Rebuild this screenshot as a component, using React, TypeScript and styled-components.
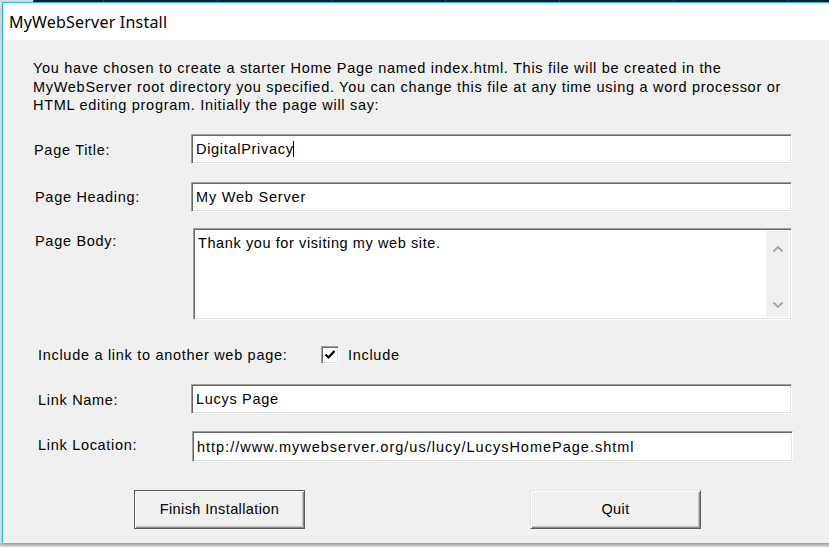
import React from 'react';
import styled, { createGlobalStyle } from 'styled-components';

const Global = createGlobalStyle`
  html, body { margin: 0; padding: 0; width: 829px; height: 547px; overflow: hidden; background: #e6e6e6; }
  #root { width: 829px; height: 547px; }
  * { box-sizing: border-box; }
`;

const Desktop = styled.div`
  width: 829px;
  height: 547px;
  overflow: hidden;
  background: #e8e8e8;
  display: flex;
  flex-direction: column;
`;

const Taskbar = styled.div`
  flex: none;
  height: 2px;
  display: flex;
  background: #0f1e2b;
`;

const TaskSlot = styled.div<{ $w: number; $light?: boolean }>`
  flex: none;
  width: ${p => p.$w}px;
  height: 2px;
  background: ${p => (p.$light ? '#dfe6ea' : '#0f1e2b')};
  border-right: 1px solid #3c4a55;
`;

const Window = styled.div`
  flex: none;
  margin-left: 2px;
  width: 860px;
  height: 541px;
  border-top: 1px solid #1cc3cf;
  border-left: 1px solid #1cc3cf;
  background: #f0f0f0;
  display: flex;
  flex-direction: column;
  box-shadow: 0 1px 4px rgba(0, 0, 0, 0.28);
  position: relative;
  z-index: 1;
`;

const TitleBar = styled.div`
  flex: none;
  height: 37px;
  background: #ffffff;
  display: flex;
  align-items: center;
  padding-left: 6px;
  padding-top: 1px;
  font-family: 'Noto Sans', 'Open Sans', sans-serif;
  font-size: 16px;
  letter-spacing: 0.2px;
  color: #000;
`;

const Client = styled.div`
  flex: 1;
  display: flex;
  flex-direction: column;
  padding: 19px 0 0 30px;
  font-family: 'Liberation Sans', Arial, sans-serif;
  font-size: 14.5px;
  letter-spacing: 0.7px;
  color: #000;
`;

const Intro = styled.p`
  margin: 0;
  line-height: 18.5px;
  white-space: nowrap;
`;

const Row = styled.div<{ $top: number; $align?: string }>`
  display: flex;
  align-items: ${p => p.$align || 'center'};
  margin-top: ${p => p.$top}px;
`;

const Label = styled.div<{ $indent: number; $w?: number; $dy?: number }>`
  flex: none;
  width: ${p => p.$w ?? 158}px;
  padding-left: ${p => p.$indent}px;
  margin-top: ${p => p.$dy ?? 0}px;
  white-space: nowrap;
`;

const Field = styled.div<{ $h: number; $shift?: number; $spacing?: number }>`
  flex: none;
  width: 601px;
  height: ${p => p.$h}px;
  margin-left: ${p => p.$shift ?? 0}px;
  letter-spacing: ${p => p.$spacing ?? 0.7}px;
  background: #fff;
  border: 1px solid;
  border-color: #a0a0a0 #ffffff #ffffff #a0a0a0;
  box-shadow: inset 1px 1px 0 #696969, inset -1px -1px 0 #e3e3e3;
  display: flex;
  align-items: center;
  padding-left: 4px;
  padding-top: 1px;
  white-space: nowrap;
  overflow: hidden;
`;

const Caret = styled.span`
  display: inline-block;
  width: 1px;
  height: 16px;
  background: #000;
  margin-left: -1px;
`;

const Area = styled.div`
  flex: none;
  width: 599px;
  height: 92px;
  margin-left: 2px;
  background: #fff;
  border: 1px solid;
  border-color: #a0a0a0 #ffffff #ffffff #a0a0a0;
  box-shadow: inset 1px 1px 0 #696969, inset -1px -1px 0 #e3e3e3;
  display: flex;
  padding: 2px;
`;

const AreaText = styled.div`
  flex: 1;
  padding: 4px 0 0 2px;
  line-height: 16px;
  letter-spacing: 0.6px;
`;

const ScrollBar = styled.div`
  flex: none;
  width: 23px;
  background: #f0f0f0;
  display: flex;
  flex-direction: column;
  justify-content: space-between;
  align-items: center;
  padding: 14px 0 8px;
`;

const Check = styled.div`
  flex: none;
  width: 18px;
  height: 18px;
  background: #fff;
  border: 1px solid;
  border-color: #a0a0a0 #ffffff #ffffff #a0a0a0;
  box-shadow: inset 1px 1px 0 #696969, inset -1px -1px 0 #e3e3e3;
  display: flex;
  align-items: center;
  justify-content: center;
`;

const CheckText = styled.span`
  margin-left: 9px;
`;

const Buttons = styled.div`
  display: flex;
  margin-top: 28px;
  padding-left: 101px;
  gap: 225px;
`;

const Button = styled.button<{ $default?: boolean }>`
  width: 171px;
  height: 39px;
  font-family: 'Liberation Sans', Arial, sans-serif;
  font-size: 14.5px;
  letter-spacing: 0.4px;
  color: #000;
  background: #f0f0f0;
  padding: 0 0 1px;
  border: 1px solid;
  border-color: ${p => (p.$default ? '#5a5a5a' : '#e3e3e3')} #5a5a5a #5a5a5a ${p => (p.$default ? '#5a5a5a' : '#e3e3e3')};
  box-shadow: inset 1px 1px 0 #ffffff, inset -1px -1px 0 #8a8a8a, inset -2px -2px 0 #c8c8c8;
`;

const Shadow = styled.div`
  flex: none;
  height: 4px;
  background: linear-gradient(#bdbdbd, #e0e0e0);
`;

const Chevron = ({ up }: { up?: boolean }) => (
  <svg width="12" height="8" viewBox="0 0 12 8">
    <path
      d={up ? 'M1.5 6.5 L6 2 L10.5 6.5' : 'M1.5 1.5 L6 6 L10.5 1.5'}
      fill="none"
      stroke="#a6a6a6"
      strokeWidth="1.8"
    />
  </svg>
);

export default function App() {
  return (
    <>
      <Global />
      <Desktop>
        <Taskbar>
          <TaskSlot $w={34} $light />
          <TaskSlot $w={70} />
          <TaskSlot $w={114} />
          <TaskSlot $w={114} />
          <TaskSlot $w={114} />
          <TaskSlot $w={114} />
          <TaskSlot $w={114} />
          <TaskSlot $w={114} />
        </Taskbar>
        <Window>
          <TitleBar>MyWebServer Install</TitleBar>
          <Client>
            <Intro>
              You have chosen to create a starter Home Page named index.html. This file will be created in the
              <br />
              MyWebServer root directory you specified. You can change this file at any time using a word processor or
              <br />
              HTML editing program. Initially the page will say:
            </Intro>
            <Row $top={19}>
              <Label $indent={1} $dy={3}>Page Title:</Label>
              <Field $h={30}>
                DigitalPrivacy
                <Caret />
              </Field>
            </Row>
            <Row $top={18}>
              <Label $indent={2}>Page Heading:</Label>
              <Field $h={30} $spacing={0.8}>My Web Server</Field>
            </Row>
            <Row $top={16} $align="flex-start">
              <Label $indent={2} $dy={5}>Page Body:</Label>
              <Area>
                <AreaText>Thank you for visiting my web site.</AreaText>
                <ScrollBar>
                  <Chevron up />
                  <Chevron />
                </ScrollBar>
              </Area>
            </Row>
            <Row $top={26}>
              <Label $indent={5} $w={288}>Include a link to another web page:</Label>
              <Check>
                <svg width="12" height="11" viewBox="0 0 12 11">
                  <path d="M1.5 5.5 L4.5 8.5 L10.5 2" fill="none" stroke="#000" strokeWidth="2.2" />
                </svg>
              </Check>
              <CheckText>Include</CheckText>
            </Row>
            <Row $top={20}>
              <Label $indent={5} $dy={3}>Link Name:</Label>
              <Field $h={30}>Lucys Page</Field>
            </Row>
            <Row $top={17}>
              <Label $indent={5} $dy={-3}>Link Location:</Label>
              <Field $h={31} $shift={1} $spacing={1}>
                http://www.mywebserver.org/us/lucy/LucysHomePage.shtml
              </Field>
            </Row>
            <Buttons>
              <Button $default>Finish Installation</Button>
              <Button>Quit</Button>
            </Buttons>
          </Client>
        </Window>
        <Shadow />
      </Desktop>
    </>
  );
}
